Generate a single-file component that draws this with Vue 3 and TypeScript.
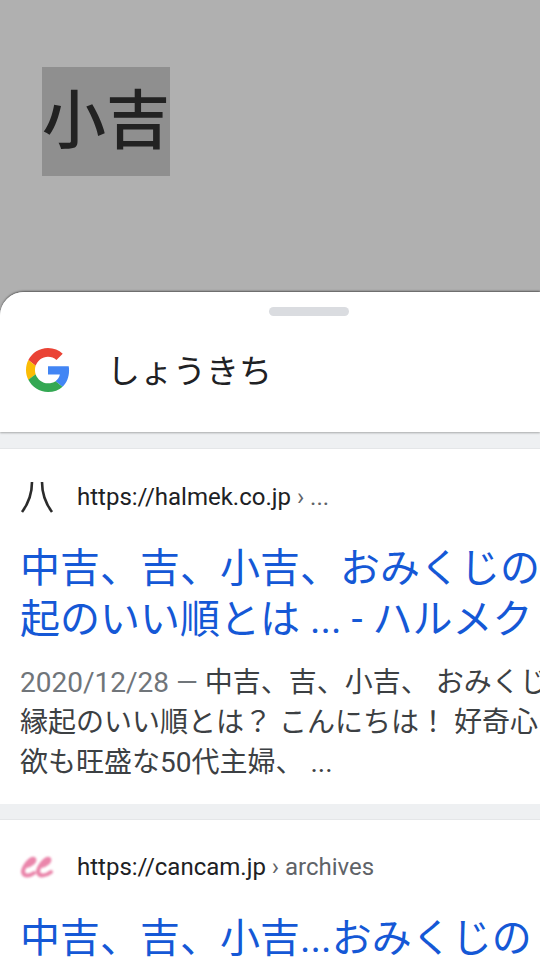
<script setup lang="ts">
interface Result {
  host: string
  crumb: string
  title: string[]
  date?: string
  snippet?: string[]
}
const results: Result[] = [
  {
    host: 'https://halmek.co.jp',
    crumb: ' › ...',
    title: ['中吉、吉、小吉、おみくじの', '起のいい順とは ... - ハルメク'],
    date: '2020/12/28 — ',
    snippet: ['中吉、吉、小吉、 おみくじ', '縁起のいい順とは？ こんにちは！ 好奇心', '欲も旺盛な50代主婦、 ...'],
  },
  {
    host: 'https://cancam.jp',
    crumb: ' › archives',
    title: ['中吉、吉、小吉...おみくじの'],
  },
]
</script>

<template>
  <div class="screen">
    <div class="backdrop">
      <span class="selected">小吉</span>
    </div>
    <section class="sheet">
      <div class="grip">
        <div class="handle"></div>
      </div>
      <header class="query">
        <svg class="g-logo" viewBox="0 0 48 48" aria-hidden="true">
          <path fill="#EA4335" d="M24 9.5c3.54 0 6.71 1.22 9.21 3.6l6.85-6.85C35.9 2.38 30.47 0 24 0 14.62 0 6.51 5.38 2.56 13.22l7.98 6.19C12.43 13.72 17.74 9.5 24 9.5z" />
          <path fill="#4285F4" d="M46.98 24.55c0-1.57-.15-3.09-.38-4.55H24v9.02h12.94c-.58 2.96-2.26 5.48-4.78 7.18l7.73 6c4.51-4.18 7.09-10.36 7.09-17.65z" />
          <path fill="#FBBC05" d="M10.53 28.59c-.48-1.45-.76-2.99-.76-4.59s.27-3.14.76-4.59l-7.98-6.19C.92 16.46 0 20.12 0 24c0 3.88.92 7.54 2.56 10.78l7.97-6.19z" />
          <path fill="#34A853" d="M24 48c6.48 0 11.93-2.13 15.89-5.81l-7.73-6c-2.15 1.45-4.92 2.3-8.16 2.3-6.26 0-11.57-4.22-13.47-9.91l-7.98 6.19C6.51 42.62 14.62 48 24 48z" />
        </svg>
        <span class="query-text">しょうきち</span>
      </header>
      <article v-for="(r, i) in results" :key="r.host" class="card">
        <div class="source">
          <svg v-if="i === 0" class="favicon" viewBox="0 0 36 36" aria-hidden="true">
            <path d="M12 3 C12 14 8 25 2 33" fill="none" stroke="#2b2b2b" stroke-width="2.6" />
            <path d="M22 3 C22 14 26 25 32 33" fill="none" stroke="#2b2b2b" stroke-width="2.6" />
          </svg>
          <svg v-else class="favicon favicon-soft" viewBox="0 0 36 36" aria-hidden="true">
            <g fill="none" stroke="#ea86ab" stroke-width="4" stroke-linecap="round">
              <path d="M6 17 C11 16 16 12 14 10 C11 8 3 18 3 23 C4 28 10 27 14 24" />
              <path d="M21 17 C26 16 31 12 29 10 C26 8 18 18 18 23 C19 28 26 27 31 23" />
            </g>
          </svg>
          <span class="url">{{ r.host }}<span class="crumb">{{ r.crumb }}</span></span>
        </div>
        <h2 class="title">
          <span v-for="line in r.title" :key="line" class="line">{{ line }}</span>
        </h2>
        <p v-if="r.snippet" class="snippet">
          <span v-for="(line, j) in r.snippet" :key="line" class="line"><span v-if="j === 0" class="date">{{ r.date }}</span>{{ line }}</span>
        </p>
      </article>
    </section>
  </div>
</template>

<style>
html, body { margin: 0; background: #fff; }
</style>

<style scoped>
.screen {
  width: 540px;
  height: 960px;
  overflow: hidden;
  display: flex;
  flex-direction: column;
  background: #b0b0b0;
  font-family: Roboto, "Noto Sans CJK JP", sans-serif;
}
.backdrop {
  height: 292px;
  flex: none;
  padding: 67px 0 0 42px;
  box-sizing: border-box;
}
.selected {
  display: block;
  width: 128px;
  height: 109px;
  background: #8f8f8f;
  color: #222;
  font-size: 64px;
  font-weight: 500;
  line-height: 97px;
  font-family: "Noto Sans CJK JP", sans-serif;
  white-space: nowrap;
}
.sheet {
  flex: 1;
  min-height: 0;
  background: #eef0f2;
  border-radius: 24px 0 0 0;
  box-shadow: 0 -1px 2px rgba(0, 0, 0, 0.5);
  overflow: hidden;
}
.grip {
  position: relative;
  z-index: 1;
  background: #fff;
  padding: 15px 0 0 269px;
}
.handle {
  width: 80px;
  height: 9px;
  border-radius: 5px;
  background: #dadce0;
}
.query {
  display: flex;
  align-items: center;
  height: 116px;
  padding: 0 0 10px 26px;
  box-sizing: border-box;
  background: #fff;
  box-shadow: 0 1px 2px rgba(0, 0, 0, 0.3);
}
.g-logo {
  width: 44px;
  height: 44px;
  flex: none;
  margin-top: 2px;
}
.query-text {
  margin-left: 37px;
  font-size: 33px;
  color: #202124;
  font-family: "Noto Sans CJK JP", sans-serif;
  line-height: 1;
}
.card {
  margin-top: 16px;
  background: #fff;
  padding: 30px 0 21px 20px;
  border-top: 1px solid #e4e6e8;
}
.card + .card {
  margin-top: 15px;
  padding-top: 29px;
}
.source {
  display: flex;
  align-items: center;
  height: 36px;
  white-space: nowrap;
}
.favicon {
  width: 36px;
  height: 36px;
  flex: none;
  filter: blur(0.5px);
}
.favicon-soft {
  filter: blur(0.8px);
}
.url {
  margin-left: 21px;
  font-size: 24px;
  color: #202124;
}
.crumb {
  color: #5f6368;
}
.title {
  margin: 28px 0 0;
  font-size: 40px;
  font-weight: 400;
  line-height: 51px;
  color: #1558d6;
  font-family: Roboto, "Noto Sans CJK JP", sans-serif;
}
.line {
  display: block;
  white-space: nowrap;
}
.snippet {
  margin: 18px 0 0;
  font-size: 28px;
  line-height: 40px;
  color: #3c4043;
}
.date {
  color: #70757a;
}
</style>
